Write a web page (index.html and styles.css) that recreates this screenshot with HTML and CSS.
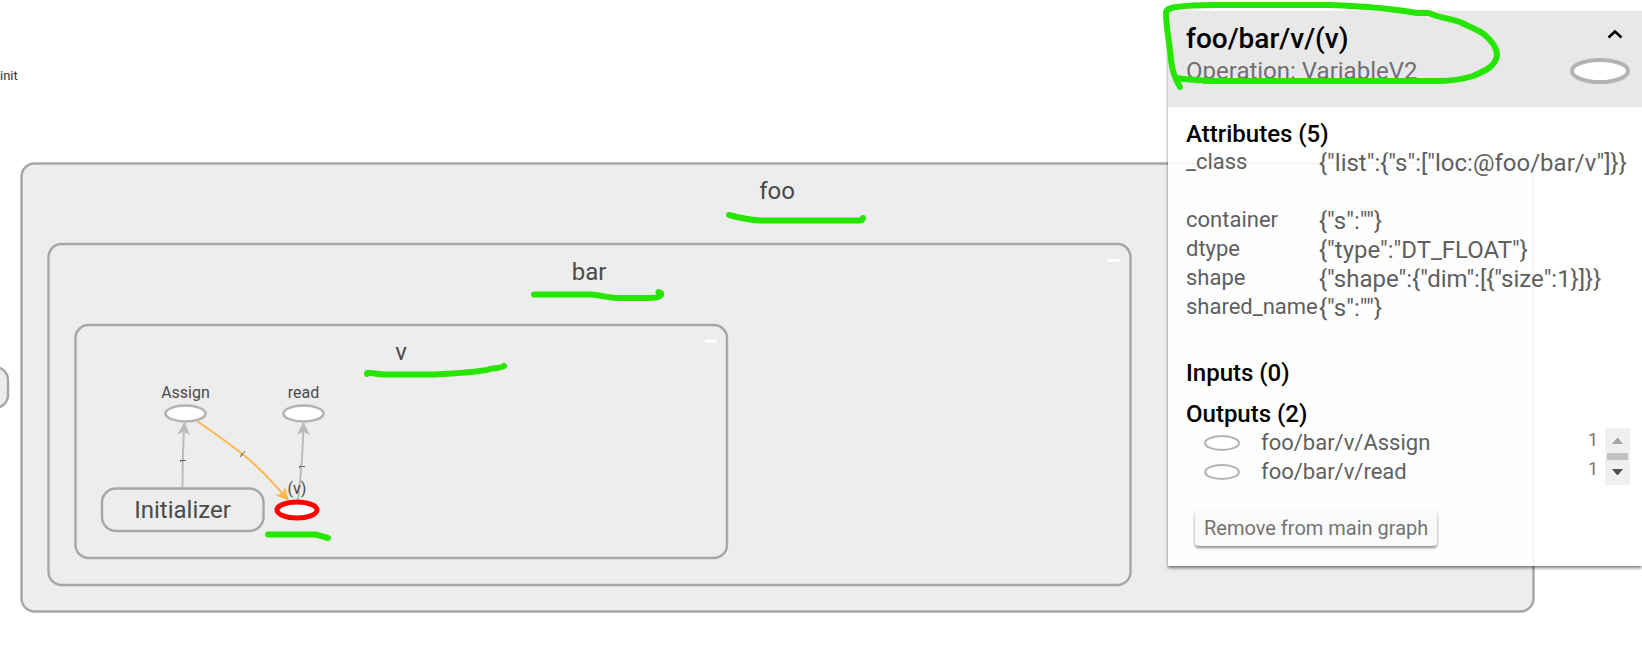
FILE: index.html
```html
<!DOCTYPE html>
<html lang="en">
<head>
<meta charset="utf-8">
<title>Graph</title>
<link rel="stylesheet" href="styles.css">
</head>
<body>
<main class="stage">
  <svg class="graph" role="img" aria-label="Graph of foo/bar/v">
    <defs>
      <marker id="arrow-gray" viewBox="0 0 12 12" refX="11" refY="6" markerWidth="13" markerHeight="13" markerUnits="userSpaceOnUse" orient="auto"><path class="head-gray" d="M0 0 12 6 0 12 3 6z"/></marker>
      <marker id="arrow-orange" viewBox="0 0 12 12" refX="11" refY="6" markerWidth="13" markerHeight="13" markerUnits="userSpaceOnUse" orient="auto"><path class="head-orange" d="M0 0 12 6 0 12 3 6z"/></marker>
    </defs>

    <text class="label-tiny" x="0" y="80">init</text>
    <rect class="box" x="-60" y="367" width="68" height="41" rx="13"/>

    <rect class="box" x="21.500" y="163.500" width="1512" height="448" rx="13"/>
    <rect class="box" x="48.500" y="244" width="1082" height="341" rx="13"/>
    <rect class="box" x="75.500" y="325" width="651.500" height="233" rx="13"/>
    <path class="collapse" d="M1108 260.500h12M705 341h12"/>
    <text class="label-large" x="777" y="199">foo</text>
    <text class="label-large" x="589" y="280">bar</text>
    <text class="label-large" x="401" y="360">v</text>

    <rect class="box" x="102" y="488.500" width="161.500" height="42.500" rx="14"/>
    <text class="label-large" x="182.500" y="518">Initializer</text>

    <path class="edge" d="M182.500 488C182.500 465 183 445 184.500 423" marker-end="url(#arrow-gray)"/>
    <path class="edge" d="M298 500C301 475 303 450 303.500 423" marker-end="url(#arrow-gray)"/>
    <path class="edge control" d="M197 421C240 451 255 461 288 500" marker-end="url(#arrow-orange)"/>
    <path class="tick" d="M180 460.500h6M180.500 460v2M299 466.500h6M299.500 466v2M240 457l5-6M241 454l1 2"/>

    <text class="label-small" x="185.500" y="398">Assign</text>
    <ellipse class="op" cx="185.500" cy="413.500" rx="20" ry="8"/>
    <text class="label-small" x="303.500" y="398">read</text>
    <ellipse class="op" cx="303.500" cy="413.500" rx="20" ry="8"/>
    <text class="label-small" x="297" y="494">(v)</text>
    <ellipse class="op selected" cx="297" cy="510" rx="20" ry="8"/>

    <g class="marks">
      <path d="M729 215C740 218 750 220 760 220.500H858C862 220.500 863 220 863 218"/>
      <path d="M534 294.500H591C600 295 608 298 618 298H650C658 298 662 296 661 293L658.500 292"/>
      <path d="M367 374C366 371 374 374.500 385 374.500H435C460 373 482 372 490 369C496 368 502 368 504 366"/>
      <path d="M268 534.500H315C319 535 323 537 328 538"/>
    </g>
  </svg>

  <aside class="panel">
    <header class="panel-head">
      <div class="head-text">
        <h1 class="title">foo/bar/v/(v)</h1>
        <p class="subtitle">Operation: VariableV2</p>
      </div>
      <div class="head-side">
        <button class="toggle" type="button" aria-label="Collapse">
          <svg width="16" height="10" viewBox="0 0 16 10"><path class="chevron" d="M1.500 8.500 8 2.500 14.500 8.500"/></svg>
        </button>
        <svg width="60" height="26"><ellipse class="head-op" cx="30" cy="13" rx="28" ry="11"/></svg>
      </div>
    </header>
    <div class="panel-body">
      <h2 class="section">Attributes (5)</h2>
      <table class="attrs">
        <tr class="double"><th scope="row">_class</th><td>{"list":{"s":["loc:@foo/bar/v"]}}</td></tr>
        <tr><th scope="row">container</th><td>{"s":""}</td></tr>
        <tr><th scope="row">dtype</th><td>{"type":"DT_FLOAT"}</td></tr>
        <tr><th scope="row">shape</th><td>{"shape":{"dim":[{"size":1}]}}</td></tr>
        <tr><th scope="row">shared_name</th><td>{"s":""}</td></tr>
      </table>
      <h2 class="section inputs">Inputs (0)</h2>
      <h2 class="section outputs">Outputs (2)</h2>
      <div class="list-wrap">
        <ul class="list">
          <li class="item"><svg width="38" height="18"><ellipse class="list-op" cx="19" cy="9" rx="17" ry="7"/></svg><span class="name">foo/bar/v/Assign</span><span class="count">1</span></li>
          <li class="item"><svg width="38" height="18"><ellipse class="list-op" cx="19" cy="9" rx="17" ry="7"/></svg><span class="name">foo/bar/v/read</span><span class="count">1</span></li>
        </ul>
        <svg class="scrollbar" width="25" height="57" aria-hidden="true">
          <path fill="#a3a3a3" d="M7 16h11l-5-6h-1z"/>
          <path fill="#c1c1c1" d="M2 25h21v7H2z"/>
          <path fill="#505050" d="M7 41h11l-5 6h-1z"/>
        </svg>
      </div>
      <button class="remove" type="button">Remove from main graph</button>
    </div>
    <svg class="circle marks" width="350" height="100" viewBox="1160 0 350 100" aria-hidden="true">
      <path d="M1180 87C1174 77 1172 70 1171 60C1170 45 1166 28 1166 13C1166 9 1170 8 1176 7C1190 5 1200 5 1215 5H1330C1360 6 1395 9 1417 13H1429C1436 17 1448 18 1460 22C1472 28 1479 30 1485 35C1494 43 1497 49 1497 55C1496 66 1485 71 1473 76C1463 79 1454 81 1440 81H1212C1199 80 1188 80 1177 78"/>
    </svg>
  </aside>
</main>
</body>
</html>
```

FILE: styles.css
```css
* { box-sizing: border-box; }

body {
  margin: 0;
  background: #fff;
  font-family: Roboto, "Liberation Sans", sans-serif;
}

.stage {
  position: relative;
  min-height: 100vh;
  overflow: hidden;
}

.graph {
  display: block;
  width: 100%;
  height: 100vh;
}

.box { fill: #ededed; stroke: #a6a6a6; stroke-width: 2.4; }
.op { fill: #fff; stroke: #b3b3b3; stroke-width: 2.6; }
.op.selected { stroke: #f00; stroke-width: 5; }
.edge { fill: none; stroke: #bbb; stroke-width: 2; }
.edge.control { stroke: #ffb74d; }
.head-gray { fill: #bbb; }
.head-orange { fill: #ffb74d; }
.tick { fill: none; stroke: #666; stroke-width: 1; }
.collapse { stroke: #fff; stroke-width: 3; }
.marks { fill: none; stroke: #26e600; stroke-width: 6; stroke-linecap: round; stroke-linejoin: round; }

.label-large, .label-small { fill: #4a4a4a; text-anchor: middle; }
.label-large { font-size: 24px; }
.label-small { font-size: 16px; }
.label-tiny { font-size: 13px; fill: #333; }

.panel {
  position: absolute;
  top: 11px;
  right: 0;
  width: 474px;
  background: rgba(255, 255, 255, 0.9);
  box-shadow: 0 2px 3px rgba(0, 0, 0, 0.5);
  color: #5f5f5f;
}

.panel-head {
  display: flex;
  justify-content: space-between;
  height: 96px;
  padding: 11px 12px 0 18px;
  background: #e8e8e8;
}

.title, .subtitle, .section { margin: 0; }
.title { font-size: 28px; line-height: 34px; font-weight: 500; color: #000; }
.subtitle { font-size: 24px; line-height: 30px; color: #707070; }

.head-side {
  display: flex;
  flex-direction: column;
  align-items: flex-end;
  gap: 19px;
  padding-top: 7px;
}

.toggle {
  display: flex;
  margin-right: 7px;
  padding: 0;
  border: 0;
  background: none;
}

.chevron { fill: none; stroke: #000; stroke-width: 2.6; }
.head-op { fill: #fff; stroke: #b3b3b3; stroke-width: 4; }

.panel-body { padding: 12px 12px 20px 18px; }

.section { font-size: 24px; line-height: 30px; font-weight: 500; color: #000; }
.inputs { margin-top: 35px; }
.outputs { margin-top: 11px; }

.attrs { border-collapse: collapse; }
.attrs tr { height: 29px; }
.attrs tr.double { height: 58px; }
.attrs th, .attrs td {
  padding: 0;
  line-height: 28px;
  vertical-align: top;
  white-space: nowrap;
  text-align: left;
  font-weight: 400;
}
.attrs th { width: 133px; font-size: 22px; line-height: 26px; }
.attrs td { font-size: 24px; }

.list-wrap { display: flex; gap: 7px; margin-top: -1px; }
.list { flex: 1; margin: 0; padding: 0 0 0 17px; list-style: none; }
.item { display: flex; align-items: center; height: 29px; }
.name { flex: 1; padding-left: 20px; font-size: 22px; line-height: 29px; }
.count { font-size: 18px; line-height: 24px; align-self: flex-start; color: #757575; }
.list-op { fill: #fff; stroke: #b3b3b3; stroke-width: 2; }
.scrollbar { background: #f0f0f0; }

.remove {
  display: block;
  margin: 24px 0 0 9px;
  padding: 6px 9px;
  border: 0;
  border-radius: 4px;
  background: #fafafa;
  box-shadow: 0 2px 3px rgba(0, 0, 0, 0.45);
  color: #737373;
  font: 20px/24px Roboto, "Liberation Sans", sans-serif;
}

.circle {
  position: absolute;
  top: -11px;
  left: -8px;
  pointer-events: none;
}
```
